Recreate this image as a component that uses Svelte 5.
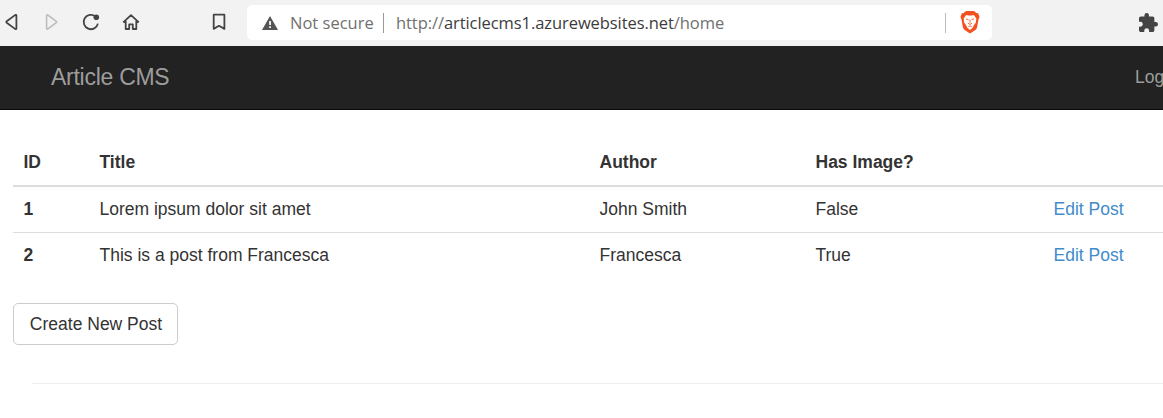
<script>
  const posts = [
    { id: 1, title: 'Lorem ipsum dolor sit amet', author: 'John Smith', image: 'False' },
    { id: 2, title: 'This is a post from Francesca', author: 'Francesca', image: 'True' }
  ];
</script>

<div class="page">
  <header class="toolbar">
    <svg class="back" width="14" height="18" viewBox="0 0 14 18"><path d="M11.400 2.400v13.200a.7.7 0 0 1-1 .5L1.700 9.700a.9.9 0 0 1 0-1.400l8.700-6.400a.7.7 0 0 1 1 .5Z" /></svg>
    <svg class="forward" width="14" height="18" viewBox="0 0 14 18"><path d="M1.600 2.400v13.200a.7.7 0 0 0 1 .5l8.700-6.400a.9.9 0 0 0 0-1.400L2.600 1.900a.7.7 0 0 0-1 .5Z" /></svg>
    <svg class="reload" width="18" height="18" viewBox="0 0 18 18"><path d="M15.900 10.600A7.200 7.200 0 1 1 13.500 3.500" /><circle cx="14.300" cy="4.300" r="2.800" /></svg>
    <svg class="home" width="18" height="18" viewBox="0 0 18 18"><path d="M1.200 9.400 9 2.200l7.800 7.200M3.700 8v8h3.500v-4.600h3.600V16h3.500V8" /></svg>
    <svg class="bookmark" width="14" height="18" viewBox="0 0 14 18"><path d="M1.700 1.700h10.700v14.200L7 12.800l-5.300 3.100Z" /></svg>
    <div class="address">
      <svg class="warning" width="16" height="14" viewBox="0 0 16 14"><path d="M8 0 16 14H0Z" /><path class="mark" d="M7.200 5h1.700v4H7.200zM7.200 10.300h1.700V12H7.200z" /></svg>
      <span class="security">Not secure</span>
      <i class="divider"></i>
      <span class="url">http://<b>articlecms1.azurewebsites.net</b>/home</span>
      <i class="divider end"></i>
      <svg class="brave" width="20" height="23" viewBox="0 0 20 24">
        <path fill="#f4511e" d="m5 .5 1.500-.5h7L15 .5l1.500 1.500 2 .3 1.500 4-1 2-1.700 9.200-1.300 2-6 4-6-4-1.300-2L1 8.300l-1-2 1.500-4 2-.3Z" />
        <path fill="#fff" d="m6 4.300 2 .5h4l2-.5 2.600 3.500-.6 4.400-2 2.600-1.200 2.700L10 19.700l-2.800-2.200L6 14.800l-2-2.600-.6-4.400Z" />
        <path fill="none" stroke="#f4511e" stroke-width=".9" d="m5.700 8.200 2.800.9M14.300 8.200l-2.800.9M10 9v3.500M7.800 12.700l2.200 1.300 2.200-1.300M8.200 16.400l1.800-.9 1.800.9" />
      </svg>
    </div>
    <svg class="puzzle" width="19" height="19" viewBox="2 1 21 21"><path d="M20.500 11H19V7c0-1.100-.9-2-2-2h-4V3.500a2.500 2.500 0 0 0-5 0V5H4c-1.100 0-2 .9-2 2v3.800h1.500a2.700 2.700 0 0 1 0 5.400H2V20c0 1.100.9 2 2 2h3.800v-1.500a2.700 2.700 0 0 1 5.400 0V22H17c1.100 0 2-.9 2-2v-4h1.500a2.500 2.500 0 0 0 0-5Z" /></svg>
  </header>

  <nav>
    <span class="brand">Article CMS</span>
    <span class="login">Log</span>
  </nav>

  <main>
    <table>
      <colgroup><col class="id" /><col class="title" /><col class="author" /><col class="image" /><col /></colgroup>
      <thead>
        <tr><th>ID</th><th>Title</th><th>Author</th><th>Has Image?</th><th></th></tr>
      </thead>
      <tbody>
        {#each posts as post}
          <tr>
            <th>{post.id}</th><td>{post.title}</td><td>{post.author}</td><td>{post.image}</td>
            <td><span class="link">Edit Post</span></td>
          </tr>
        {/each}
      </tbody>
    </table>
    <button>Create New Post</button>
    <hr />
  </main>
</div>

<style>
  :global(body) { margin: 0; overflow: hidden; background: #fff; }
  .page { width: 1163px; height: 418px; overflow: hidden; color: #333; font: 17.5px/25px "Liberation Sans", Arial, sans-serif; }
  .toolbar { height: 46px; box-sizing: border-box; padding-bottom: 2px; display: flex; align-items: center; background: #f2f2f2; }
  svg { display: block; flex: none; }
  .toolbar > svg { fill: none; stroke: #444; stroke-width: 1.8; stroke-linejoin: round; }
  .back { margin-left: 5px; }
  .toolbar > .forward { margin-left: 26px; stroke: #bbb; stroke-width: 1.5; }
  .reload { margin-left: 23px; }
  .reload circle { fill: #444; stroke: none; }
  .home { margin-left: 22px; }
  .bookmark { margin-left: 72px; }
  .address { width: 745px; height: 35px; margin: 1px 0 0 21px; box-sizing: border-box; padding-left: 15px; display: flex; align-items: center; flex: none; border-radius: 5px; background: #fff; font: 16.5px/24px "Open Sans", "Noto Sans", sans-serif; color: #707070; }
  .warning { fill: #555; }
  .warning .mark { fill: #fff; }
  .security { width: 84px; margin-left: 12px; white-space: nowrap; }
  .divider { width: 1px; height: 20px; margin-left: 9px; background: #999; }
  .divider.end { margin-left: auto; background: #bbb; }
  .url { margin-left: 12px; white-space: nowrap; letter-spacing: -.07px; }
  .url b { font-weight: 400; color: #3c3c3c; }
  .brave { margin: 0 12px 0 14px; }
  .toolbar > .puzzle { margin-left: 147px; fill: #444; stroke: none; }
  nav { height: 64px; box-sizing: border-box; display: flex; justify-content: space-between; align-items: center; padding: 0 0 1px 51px; border-bottom: 1px solid #080808; background: #222; color: #9d9d9d; }
  .brand { font-size: 23px; letter-spacing: -.27px; }
  .login { width: 28px; white-space: nowrap; }
  main { padding: 30px 0 0 13px; }
  table { width: 1160px; table-layout: fixed; border-collapse: collapse; }
  col.id { width: 76px; }
  col.title { width: 500px; }
  col.author { width: 216px; }
  col.image { width: 238px; }
  th, td { height: 25px; padding: 10px 10px 10px 10.5px; text-align: left; white-space: nowrap; border-top: 1px solid #ddd; }
  thead th { border-top: 0; border-bottom: 2px solid #ddd; }
  .link { color: #428bca; }
  button { display: block; width: 165px; height: 42px; margin-top: 25px; padding: 0 0 0 1px; border: 1px solid #ccc; border-radius: 5px; background: #fff; color: #333; font: inherit; }
  hr { margin: 38px 0 0 19px; border: 0; border-top: 1px solid #eee; }
</style>
